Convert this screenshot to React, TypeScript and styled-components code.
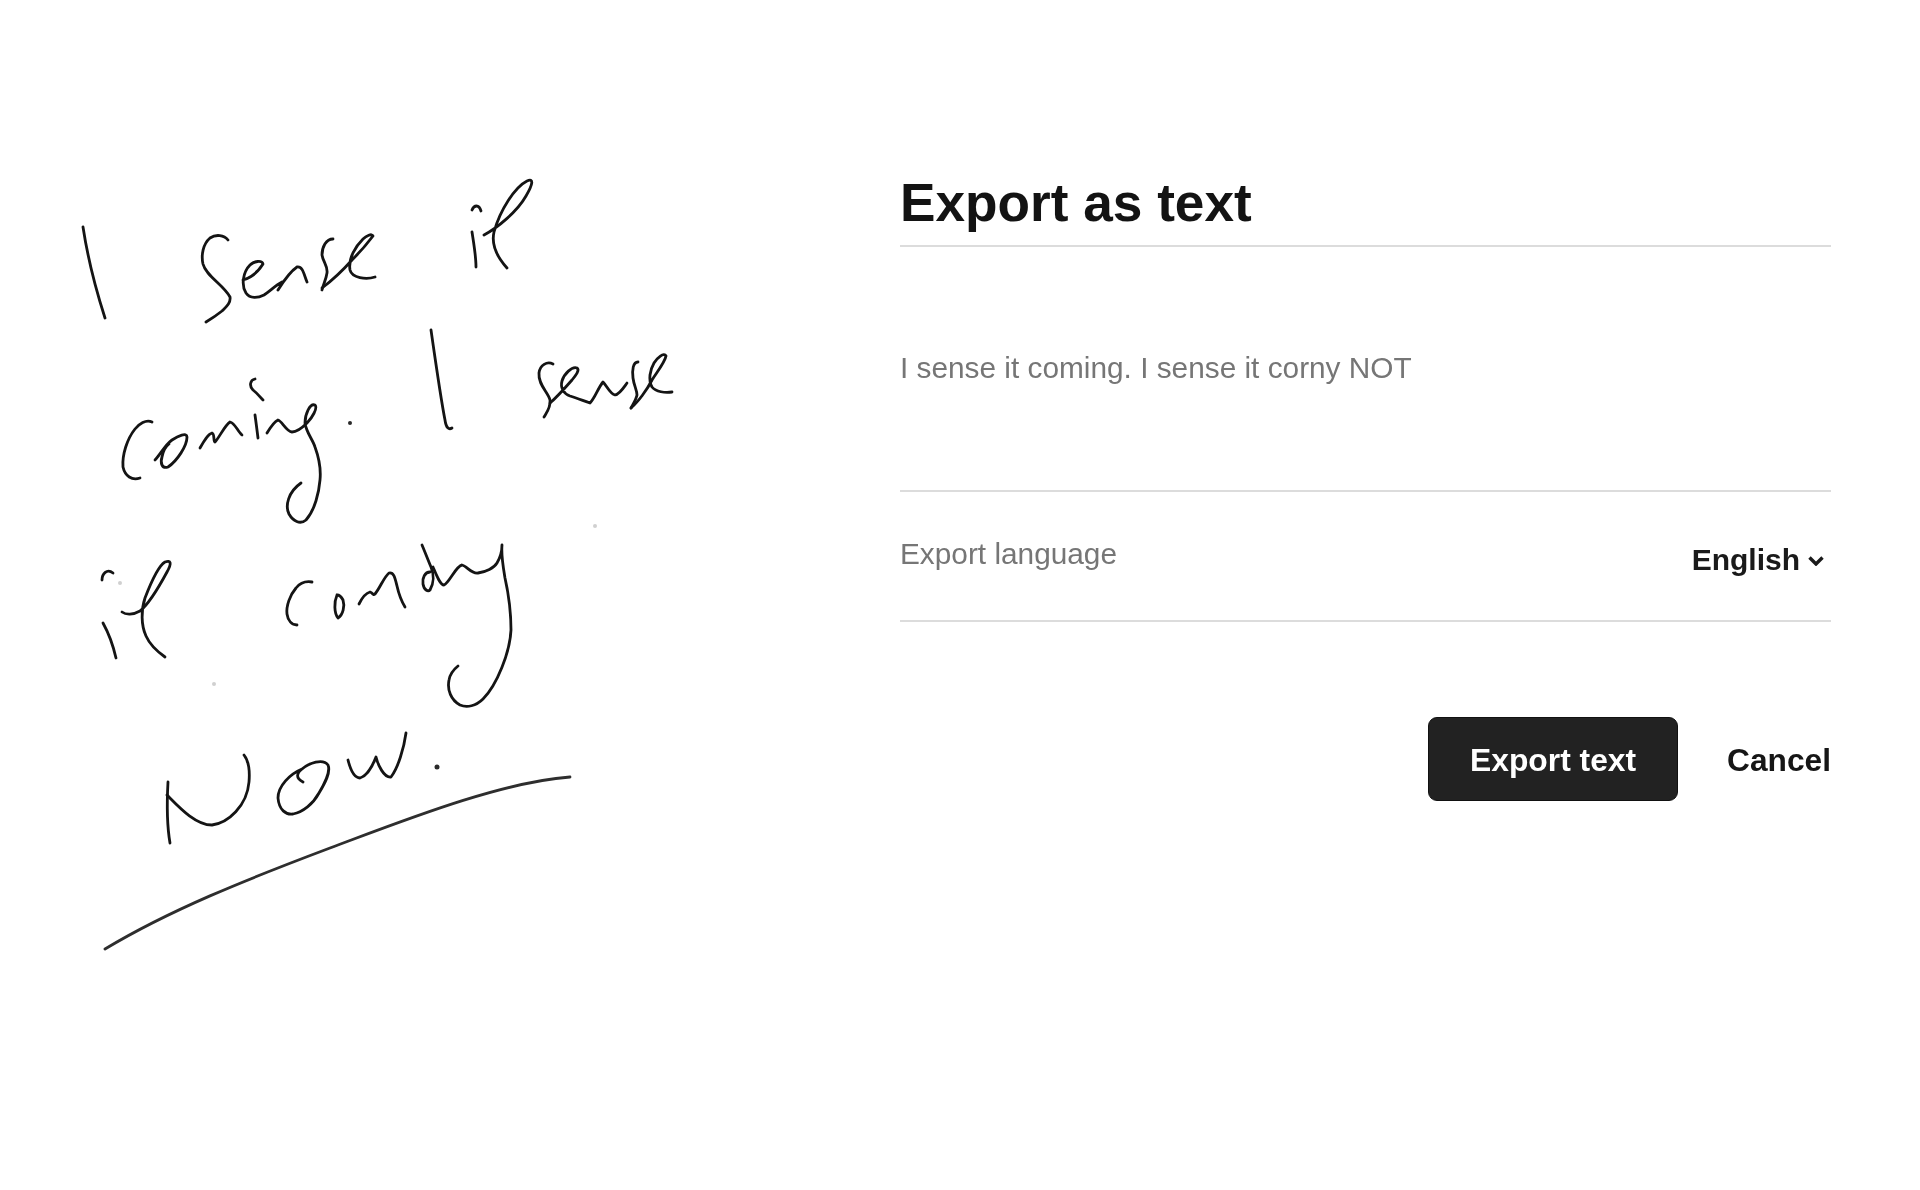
import React from "react";
import styled, { createGlobalStyle } from "styled-components";

// handwriting strokes, in page pixels
const strokes = [
  // I
  "M83 227 C88 260 96 290 105 318",
  // Sense
  "M228 240 C224 235 216 234 210 238 C203 244 201 255 203 264 C206 276 224 285 230 297 C231 303 226 307 222 311 C217 315 211 319 206 322",
  "M243 280 C250 278 258 272 263 264 C262 260 254 261 250 265 C243 272 241 285 246 293 C250 299 258 298 264 295 C270 291 276 285 282 282 C282 285 279 288 278 290 C283 282 291 271 297 267 C303 266 304 275 307 282",
  "M333 239 C326 239 322 247 322 255 C323 262 328 266 327 273 C326 280 323 285 322 290",
  "M322 288 C330 282 344 269 352 260 C360 252 370 240 373 236 C372 233 366 236 363 239 C356 246 348 258 350 270 C352 278 366 280 375 277",
  // it
  "M472 210 C474 205 479 204 481 211",
  "M472 232 C474 245 476 256 476 267",
  "M484 235 C497 228 517 212 526 196 C533 184 534 178 527 181 C515 187 500 210 494 232 C491 245 498 258 507 268",
  // coming
  "M152 422 C146 419 139 424 135 429 C127 439 122 455 123 467 C125 476 132 481 140 478",
  "M155 460 C160 455 165 445 172 440 C178 436 187 432 187 437 C187 446 177 461 168 467 C162 469 160 463 162 457 C163 452 165 447 169 444",
  "M200 448 C204 441 208 434 212 433 C215 434 213 441 215 442 C219 438 225 425 230 422 C235 423 238 432 242 435",
  "M255 415 C256 422 257 430 258 438",
  "M255 379 C250 380 249 386 253 390 C257 393 260 397 263 400",
  "M267 433 C270 428 274 422 278 420 C282 421 286 431 292 432 C298 432 303 427 307 423 C312 418 318 408 315 405 C310 403 305 414 305 423 C306 432 313 440 315 447 C319 458 321 470 320 480 C319 492 315 510 306 520 C300 525 293 521 289 514 C285 506 288 492 301 483",
  // | sense
  "M431 330 C436 365 441 400 445 420 C446 428 449 430 452 428",
  "M553 364 C547 361 540 365 539 373 C538 385 548 392 550 400 C551 407 547 412 544 417",
  "M550 403 C556 398 565 388 572 380 C576 375 580 370 577 368 C572 366 564 374 562 381 C560 388 564 394 570 396 C577 398 584 401 590 403 C595 398 598 388 603 382 C607 386 610 394 615 395 C620 394 624 387 627 383",
  "M638 362 C633 362 632 370 633 378 C634 386 637 390 637 395 C636 400 633 404 631 408",
  "M631 408 C638 402 647 390 652 380 C657 372 665 362 666 356 C664 352 657 358 654 363 C650 370 648 380 652 387 C656 392 665 393 672 392",
  // it
  "M102 580 C102 574 107 568 113 573",
  "M103 623 C108 632 113 645 116 658",
  "M122 612 C126 615 133 615 140 611 C150 603 160 585 167 572 C172 563 171 560 165 562 C158 566 150 585 145 598 C141 610 141 625 146 636 C150 645 158 652 165 657",
  // coming
  "M312 582 C306 581 300 583 296 588 C290 595 286 606 287 614 C288 621 292 625 297 625",
  "M337 595 C334 602 334 613 338 618 C343 615 345 606 343 600 C341 596 339 595 337 595",
  "M359 604 C362 598 366 593 370 592 C373 593 373 596 375 594 C380 588 384 577 389 573 C394 572 395 578 397 586 C399 595 402 602 405 607",
  "M430 572 C425 572 422 578 423 584 C424 590 428 592 430 590 C434 583 434 574 431 567 C428 560 425 552 422 545",
  "M433 567 C436 574 440 585 444 585 C449 583 456 566 462 565 C467 566 471 574 478 573 C486 572 494 568 497 563 C500 558 502 550 502 545 C501 555 503 566 505 578 C509 596 511 612 511 630 C510 652 497 685 483 699 C476 706 467 708 460 705 C451 700 447 690 449 680 C450 674 453 670 458 666",
  // Now
  "M168 782 C167 800 166 820 170 843",
  "M167 795 C178 806 195 825 212 825 C228 823 247 806 249 782 C250 770 248 760 244 755",
  "M302 769 C290 774 278 786 278 798 C279 810 286 815 293 814 C303 812 313 804 319 793 C325 783 331 772 328 765 C323 758 309 763 302 769 C297 773 295 778 303 782",
  "M348 760 C350 768 354 778 360 778 C367 776 373 765 376 757 C378 765 384 778 391 777 C398 768 404 748 406 733",
];

const underline =
  "M105 949 C170 910 245 880 330 848 C400 822 500 782 570 777";

function Handwriting() {
  return (
    <Drawing viewBox="0 0 900 1190">
      {strokes.map((d) => (
        <Ink key={d} d={d} />
      ))}
      <Rule d={underline} />
      <Dot cx={350} cy={423} r={2} />
      <Dot cx={437} cy={767} r={2.5} />
      <Speck cx={595} cy={526} r={2} />
      <Speck cx={214} cy={684} r={2} />
      <Speck cx={120} cy={583} r={2} />
    </Drawing>
  );
}

function App() {
  return (
    <>
      <GlobalStyle />
      <Page>
        <Handwriting />
        <Panel>
          <Title>Export as text</Title>
          <Message>I sense it coming. I sense it corny NOT</Message>
          <LanguageRow>
            <LanguageLabel>Export language</LanguageLabel>
            <LanguageSelect>
              English
              <Chevron viewBox="0 0 16 11">
                <path d="M1.5 2.5 L8 9 L14.5 2.5" />
              </Chevron>
            </LanguageSelect>
          </LanguageRow>
          <Actions>
            <ExportButton>Export text</ExportButton>
            <CancelButton>Cancel</CancelButton>
          </Actions>
        </Panel>
      </Page>
    </>
  );
}

export default App;

const GlobalStyle = createGlobalStyle`
  html, body {
    margin: 0;
    padding: 0;
    background: #ffffff;
  }
  body {
    font-family: "Liberation Sans", Arial, sans-serif;
  }
`;

const Page = styled.div`
  width: 1920px;
  height: 1190px;
  display: flex;
  overflow: hidden;
  background: #ffffff;
`;

const Drawing = styled.svg`
  flex: none;
  width: 900px;
  height: 1190px;
  filter: blur(0.6px);
`;

const Ink = styled.path`
  fill: none;
  stroke: #141414;
  stroke-width: 2.8;
  stroke-linecap: round;
  stroke-linejoin: round;
`;

const Rule = styled.path`
  fill: none;
  stroke: #2e2e2e;
  stroke-width: 2.8;
  stroke-linecap: round;
`;

const Dot = styled.circle`
  fill: #2a2a2a;
`;

const Speck = styled.circle`
  fill: #d0d0d0;
`;

const Panel = styled.div`
  flex: none;
  width: 931px;
  padding-top: 173px;
  display: flex;
  flex-direction: column;
  filter: blur(0.5px);
`;

const Title = styled.h1`
  margin: 0;
  padding-bottom: 12px;
  font-size: 53.2px;
  line-height: 60px;
  font-weight: 700;
  color: #131313;
  border-bottom: 2px solid #dcdcdc;
`;

const Message = styled.div`
  box-sizing: border-box;
  height: 245px;
  padding-top: 103px;
  font-size: 29.8px;
  line-height: 36px;
  color: #767676;
  border-bottom: 2px solid #dcdcdc;
`;

const LanguageRow = styled.div`
  box-sizing: border-box;
  height: 130px;
  padding: 44px 7px 0 0;
  display: flex;
  justify-content: space-between;
  align-items: flex-start;
  border-bottom: 2px solid #dcdcdc;
`;

const LanguageLabel = styled.span`
  font-size: 29.8px;
  line-height: 36px;
  color: #767676;
`;

const LanguageSelect = styled.span`
  margin-top: 6px;
  display: flex;
  align-items: center;
  gap: 8px;
  font-size: 30px;
  line-height: 36px;
  font-weight: 700;
  color: #1a1a1a;
`;

const Chevron = styled.svg`
  width: 16px;
  height: 11px;
  fill: none;
  stroke: #1a1a1a;
  stroke-width: 3.4;
`;

const Actions = styled.div`
  margin-top: 95px;
  display: flex;
  justify-content: flex-end;
  align-items: center;
  gap: 49px;
`;

const ExportButton = styled.button`
  box-sizing: border-box;
  width: 250px;
  height: 84px;
  padding: 2px 0 0;
  border: 1px solid #111111;
  border-radius: 9px;
  background: #222222;
  color: #ffffff;
  font-family: inherit;
  font-size: 31.8px;
  font-weight: 700;
`;

const CancelButton = styled.button`
  padding: 3px 0 0;
  border: none;
  background: none;
  color: #161616;
  font-family: inherit;
  font-size: 31.7px;
  font-weight: 700;
`;
